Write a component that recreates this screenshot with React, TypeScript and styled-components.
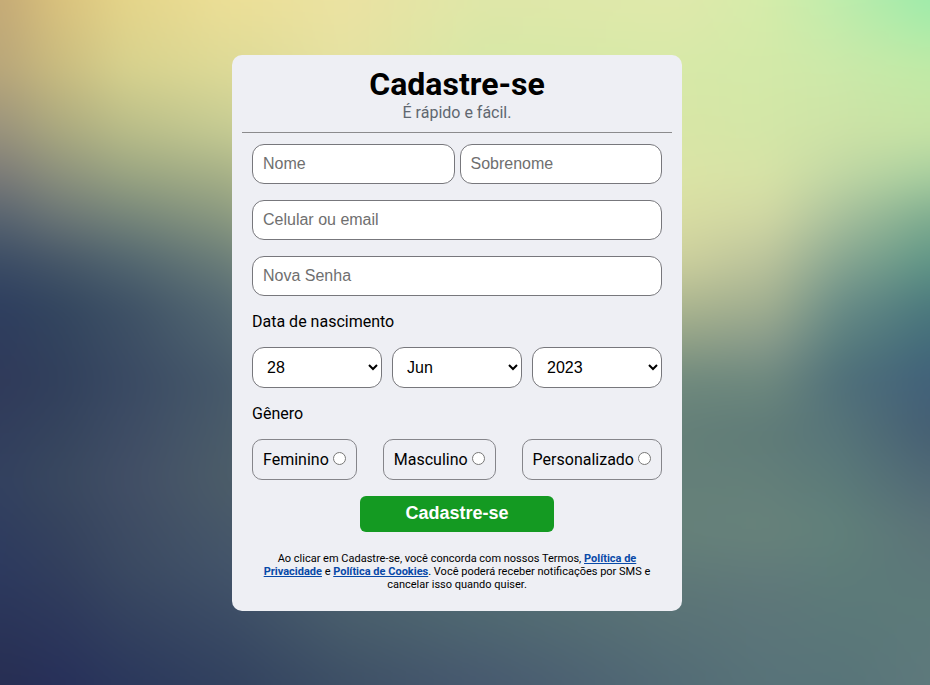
import React from 'react';
import styled, { createGlobalStyle } from 'styled-components';

const GlobalStyle = createGlobalStyle`
  * { box-sizing: border-box; margin: 0; padding: 0; }
  body { font-family: Roboto, sans-serif; font-size: 16px; color: #000; overflow: hidden; }
`;

const Page = styled.div`
  display: grid;
  width: 100%;
  height: 100vh;
  overflow: hidden;
`;

// The backdrop runs past the window so that its blurred rim stays out of view.
const BLEED = 40;

const Backdrop = styled.div`
  grid-area: 1 / 1;
  display: grid;
  margin: -${BLEED}px;
  filter: blur(14px);
`;

const Wash = styled.div<{ $stops: string; $from: number; $to: number }>`
  grid-area: 1 / 1;
  background: linear-gradient(to bottom, ${p => p.$stops});
  mask-image: ${p => p.$to > 0
    ? `linear-gradient(to right, transparent ${p.$from + BLEED}px, #000 ${p.$to + BLEED}px)`
    : 'none'};
`;

const Stage = styled.main`
  grid-area: 1 / 1;
  z-index: 1;
  display: flex;
  justify-content: center;
  align-items: flex-start;
  padding: 55px 16px 0 0;
`;

const Card = styled.section`
  width: 450px;
  height: 556px;
  padding: 10px;
  border-radius: 10px;
  background: #eeeff4;
`;

const Header = styled.header`
  height: 67px;
  text-align: center;
`;

const Title = styled.h1`
  font-size: 32px;
  line-height: 38px;
  font-weight: 700;
`;

const Subtitle = styled.p`
  color: #606770;
  line-height: 19px;
`;

const Rule = styled.hr`
  height: 1px;
  border: 0;
  background: #8b8b8d;
  margin-bottom: 11px;
`;

const Form = styled.form`
  padding: 0 10px;
`;

const Row = styled.div<{ $gap?: number }>`
  display: flex;
  justify-content: space-between;
  gap: ${p => p.$gap ?? 0}px;
  margin-bottom: 16px;
`;

const Field = styled.input`
  flex: 1;
  min-width: 0;
  height: 40px;
  padding: 0 10px;
  border: 1px solid #77777c;
  border-radius: 12px;
  background: #fff;
  font: 16px "Liberation Sans", sans-serif;
  &::placeholder { color: #6f6f6f; }
`;

const Label = styled.p`
  line-height: 19px;
  margin-bottom: 16px;
`;

const Select = styled.select`
  flex: 1;
  height: 41px;
  padding: 0 10px;
  border: 1px solid #77777c;
  border-radius: 12px;
  background: #fff;
  color: #000;
  font: 16px "Liberation Sans", sans-serif;
`;

const Option = styled.label`
  height: 41px;
  padding: 0 10px;
  border: 1px solid #85858a;
  border-radius: 10px;
  line-height: 39px;
  white-space: nowrap;
`;

const Radio = styled.input.attrs({ type: 'radio' })`
  width: 13px;
  height: 13px;
  margin-left: 4px;
`;

const Submit = styled.button`
  display: block;
  width: 194px;
  height: 36px;
  margin: 0 auto;
  padding-bottom: 2px;
  border: 0;
  border-radius: 6px;
  background: #149a22;
  color: #fff;
  font: bold 18px "Liberation Sans", sans-serif;
`;

const Terms = styled.p`
  margin-top: 20px;
  padding: 0 10px;
  font-size: 11px;
  line-height: 13px;
  text-align: center;
`;

const PolicyLink = styled.a`
  color: #0849a8;
  font-weight: 700;
  text-decoration: underline;
`;

// Vertical colour ramps, blended into one another from left to right.
const leftYs = [0, 70, 131, 175, 218, 262, 306, 380, 480, 568, 685];
const rightYs = [0, 70, 131, 175, 218, 262, 306, 350, 380, 430, 530, 600, 685];
const middleYs = [0, 55, 200, 330, 480, 610, 685];

const ramps: { x: number; ys: number[]; colors: string }[] = [
  { x: 0, ys: leftYs, colors: 'c5aa76 b8a67a 99927c 7b7a78 576370 3b4c65 2e3e5f 303a5a 33415f 2d3a5f 272e52' },
  { x: 60, ys: leftYs, colors: 'dac27d c9bc80 aaa97f 8c917d 6a7576 455668 33465f 31405c 39485f 323f5d 27305a' },
  { x: 130, ys: leftYs, colors: 'e5d58a d7d28e b9bd89 9aa582 75857a 526670 3f5266 3a4a63 424f66 3b4a62 2b385c' },
  { x: 232, ys: leftYs, colors: 'ecdf97 ddda97 c5cb93 a7b187 8a9980 6b7e79 566b74 475a6b 4c5d69 43546a 32425f' },
  { x: 350, ys: middleYs, colors: 'ebe2a2 e6e2a2 d8dc9d 8a967d 536870 4a5f6d 3e5066' },
  { x: 480, ys: middleYs, colors: 'dfe7a8 d8e8a7 d8dfa2 9ba682 5c746f 506972 47596f' },
  { x: 682, ys: rightYs, colors: 'dfe9ab d7e9a8 d8e6a6 dbe4a6 d8dca2 cccf9d adb690 899b84 6f897d 647f78 66817a 5c7577 536c76' },
  { x: 770, ys: rightYs, colors: 'd4ecaa d3e9a8 d3e6a7 d6e2a6 cfd6a3 b9c29b a0ae90 829689 6d887e 5f7b78 67827b 5e777a 587379' },
  { x: 840, ys: rightYs, colors: 'beecac cce9a9 cde2a6 c1d7a4 a8c09c 88a691 6a8d87 577b7d 50707a 567479 60807a 5c7a79 587479' },
  { x: 930, ys: rightYs, colors: '9debaa c0eaa6 c6e2a4 a9cf9f 7eac8f 5f9586 4b797d 42697a 41617a 455f73 5b7378 5c7a79 5e797c' },
];

const toStops = (ys: number[], colors: string) =>
  colors.split(' ').map((c, i) => `#${c} ${ys[i] + BLEED}px`).join(', ');

export default function App() {
  return (
    <>
      <GlobalStyle />
      <Page>
        <Backdrop>
          {ramps.map((r, i) => (
            <Wash key={r.x} $stops={toStops(r.ys, r.colors)} $from={i ? ramps[i - 1].x : 0} $to={r.x} />
          ))}
        </Backdrop>
        <Stage>
          <Card>
            <Header>
              <Title>Cadastre-se</Title>
              <Subtitle>É rápido e fácil.</Subtitle>
            </Header>
            <Rule />
            <Form onSubmit={e => e.preventDefault()}>
              <Row $gap={5}>
                <Field placeholder="Nome" />
                <Field placeholder="Sobrenome" />
              </Row>
              <Row><Field placeholder="Celular ou email" /></Row>
              <Row><Field type="password" placeholder="Nova Senha" /></Row>
              <Label>Data de nascimento</Label>
              <Row $gap={10}>
                <Select><option>28</option></Select>
                <Select><option>Jun</option></Select>
                <Select><option>2023</option></Select>
              </Row>
              <Label>Gênero</Label>
              <Row>
                {['Feminino', 'Masculino', 'Personalizado'].map(g => (
                  <Option key={g}>{g}<Radio name="genero" /></Option>
                ))}
              </Row>
              <Submit>Cadastre-se</Submit>
              <Terms>
                Ao clicar em Cadastre-se, você concorda com nossos Termos, <PolicyLink href="#">Política de Privacidade</PolicyLink> e <PolicyLink href="#">Política de Cookies</PolicyLink>. Você poderá receber notificações por SMS e cancelar isso quando quiser.
              </Terms>
            </Form>
          </Card>
        </Stage>
      </Page>
    </>
  );
}
